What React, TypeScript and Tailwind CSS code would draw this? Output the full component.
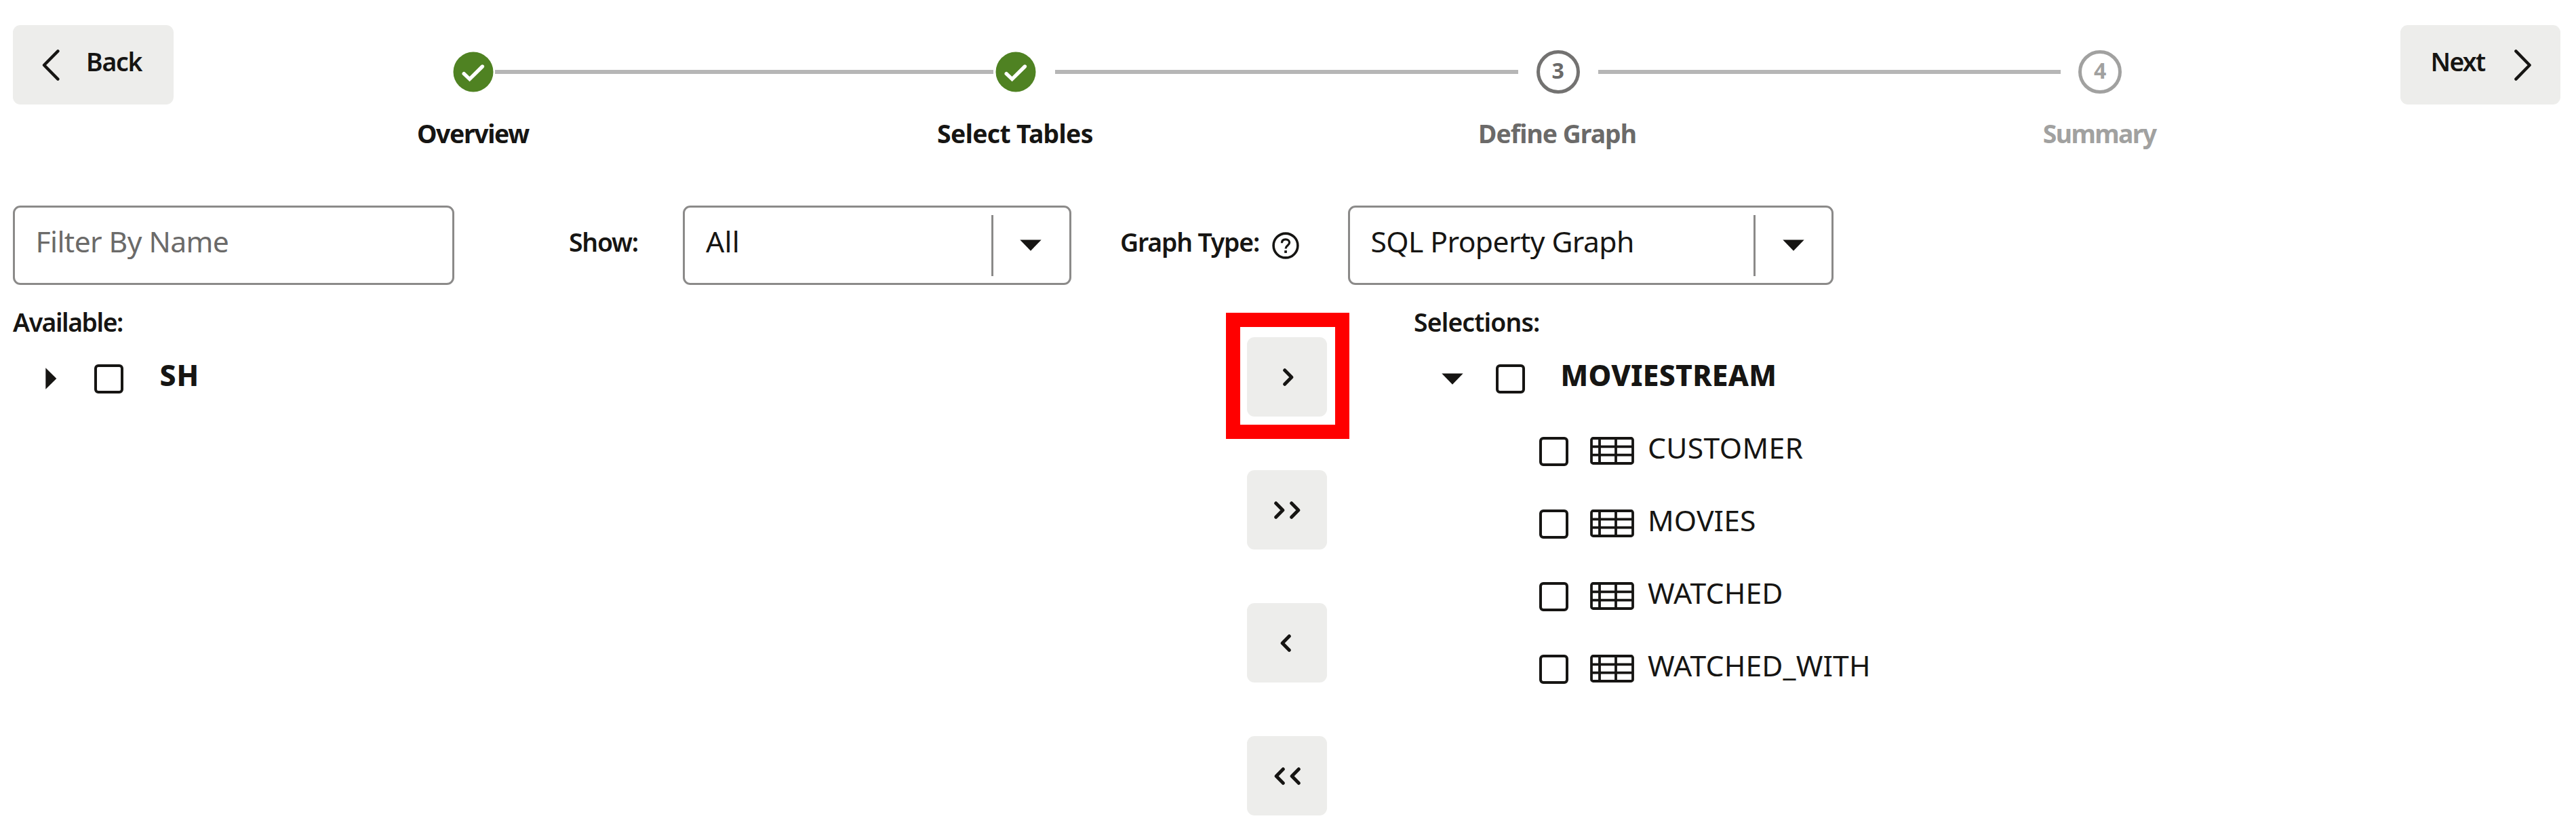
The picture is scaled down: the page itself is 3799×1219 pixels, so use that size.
import React from "react";

const label = "text-[37.33px] leading-[48px] font-semibold whitespace-nowrap";
const body = "text-[42.67px] leading-[56px] whitespace-nowrap";

function LargeChevron({ flip = false }: { flip?: boolean }) {
  return (
    <svg
      width="26"
      height="46"
      viewBox="0 0 26 46"
      fill="none"
      stroke="#161513"
      strokeWidth="4.4"
      strokeLinecap="round"
      strokeLinejoin="round"
      className="shrink-0"
    >
      <path d={flip ? "M2.4 2.4 22.6 23 2.4 43.6" : "M23.4 2.4 3 23l20.4 20.6"} />
    </svg>
  );
}

function SmallChevron({ dir }: { dir: "left" | "right" }) {
  return (
    <svg
      width="16"
      height="26"
      viewBox="0 0 16 26"
      fill="none"
      stroke="#161513"
      strokeWidth="5"
      strokeLinecap="round"
      strokeLinejoin="round"
    >
      <path d={dir === "right" ? "M2.7 2.7 12.8 13 2.7 23.3" : "M13.3 2.7 3.2 13l10.1 10.3"} />
    </svg>
  );
}

function TriangleDown() {
  return (
    <svg width="32" height="17" viewBox="0 0 32 17" fill="#161513" className="shrink-0">
      <path d="M0.3 0.5h31.4L16 16.7z" />
    </svg>
  );
}

function Checkbox() {
  return <span className="box-border h-[43px] w-[43px] shrink-0 rounded-[6px] border-[4px] border-[#161513]" />;
}

function TableIcon() {
  return (
    <svg width="65" height="41" viewBox="0 0 65 41" fill="none" stroke="#161513" strokeWidth="3.8" className="shrink-0">
      <rect x="2" y="2" width="61" height="37" rx="2.5" />
      <path d="M2 14.4h61M2 26.7h61M14 2v37M38 2v37" />
    </svg>
  );
}

function Step({
  title,
  titleClass,
  marker,
  left,
  right,
}: {
  title: string;
  titleClass: string;
  marker: React.ReactNode;
  left: string;
  right: string;
}) {
  return (
    <li className="flex flex-col items-center">
      <div className="grid w-full grid-cols-[1fr_64px_1fr] items-center">
        <span className={left} />
        <span className="flex h-[64px] items-center justify-center">{marker}</span>
        <span className={right} />
      </div>
      <span className={`mt-[35px] mr-[2px] text-[37.33px] leading-[48px] font-bold whitespace-nowrap ${titleClass}`}>
        {title}
      </span>
    </li>
  );
}

function DoneMarker() {
  return (
    <svg width="60" height="60" viewBox="0 0 60 60">
      <circle cx="30" cy="30" r="29.5" fill="#4f8222" />
      <path
        d="M16.2 32.6l8.4 8L43.4 22"
        fill="none"
        stroke="#fff"
        strokeWidth="5.4"
        strokeLinecap="round"
        strokeLinejoin="miter"
      />
    </svg>
  );
}

function Select({ value, width, textClass, arrow }: { value: string; width: string; textClass: string; arrow: string }) {
  return (
    <div className={`flex h-[117px] items-center rounded-[11px] border-[3px] border-[#8b8a89] ${width}`}>
      <span className={`flex-1 pb-[12px] pl-[31px] ${body} ${textClass}`}>{value}</span>
      <span className={`flex h-[90px] items-center border-l-[3px] border-[#8b8a89] ${arrow}`}>
        <TriangleDown />
      </span>
    </div>
  );
}

const moves: { dir: "left" | "right"; count: number; pad: string }[] = [
  { dir: "right", count: 1, pad: "pl-[4px]" },
  { dir: "right", count: 2, pad: "" },
  { dir: "left", count: 1, pad: "pr-[4px]" },
  { dir: "left", count: 2, pad: "" },
];

const tables = [
  { name: "CUSTOMER", spacing: "tracking-[0.35px]" },
  { name: "MOVIES", spacing: "tracking-[0.15px]" },
  { name: "WATCHED", spacing: "tracking-[0.15px]" },
  { name: "WATCHED_WITH", spacing: "tracking-[0.15px]" },
];

const line = "h-[6px] bg-[#b6b6b6]";

export default function App() {
  return (
    <main className="flex h-[1219px] w-[3799px] flex-col overflow-hidden bg-white font-['Noto_Sans',sans-serif] text-[#161513]">
      <header className="flex h-[303px] shrink-0 pr-[23px] pl-[19px]">
        <button className="mt-[37px] flex h-[117px] w-[237px] shrink-0 items-center rounded-[11px] bg-[#ededeb] pl-[43px]">
          <LargeChevron />
          <span className={`ml-[39px] pb-[9px] tracking-[-1.2px] ${label}`}>Back</span>
        </button>
        <ol className="mx-[42.5px] mt-[74px] grid flex-1 grid-cols-4 content-start">
          <Step title="Overview" titleClass="tracking-[-1.37px]" marker={<DoneMarker />} left="" right={line} />
          <Step
            title="Select Tables"
            titleClass="tracking-[-0.65px]"
            marker={<DoneMarker />}
            left={`mr-px ${line}`}
            right={`ml-[26px] ${line}`}
          />
          <Step
            title="Define Graph"
            titleClass="tracking-[-0.98px] text-[#6b6a69]"
            marker={
              <span className="flex h-[64px] w-[64px] items-center justify-center rounded-full border-[5px] border-[#737271] pb-[5px] text-[32px] leading-[40px] font-bold text-[#6b6a69]">
                3
              </span>
            }
            left={`mr-[27px] ${line}`}
            right={`ml-[27px] ${line}`}
          />
          <Step
            title="Summary"
            titleClass="tracking-[-1.6px] text-[#a1a1a0]"
            marker={
              <span className="flex h-[64px] w-[64px] items-center justify-center rounded-full border-[5px] border-[#a1a1a0] pb-[5px] text-[32px] leading-[40px] font-bold text-[#a1a1a0]">
                4
              </span>
            }
            left={`mr-[26px] ${line}`}
            right=""
          />
        </ol>
        <button className="mt-[37px] flex h-[117px] w-[236.5px] shrink-0 items-center rounded-[11px] bg-[#ededeb] pl-[45px] text-left">
          <span className={`w-[123px] shrink-0 pb-[9px] tracking-[-1.7px] ${label}`}>Next</span>
          <LargeChevron flip />
        </button>
      </header>

      <section className="flex h-[117px] shrink-0 items-center pl-[19px]">
        <input
          placeholder="Filter By Name"
          className="h-[117px] w-[651px] rounded-[11px] border-[3px] border-[#8b8a89] pb-[12px] pl-[30.5px] text-[42.67px] tracking-[-0.6px] placeholder:text-[#6b6a69] placeholder:opacity-100"
        />
        <span className={`ml-[169px] w-[168px] pb-[9px] tracking-[-1.2px] ${label}`}>Show:</span>
        <Select value="All" width="w-[573px]" textClass="tracking-[0.3px]" arrow="w-[115px] pl-[39px]" />
        <span className={`ml-[72px] w-[224px] pb-[9px] tracking-[-1.14px] ${label}`}>Graph Type:</span>
        <svg width="40" height="40" viewBox="0 0 40 40" fill="none" stroke="#161513" strokeWidth="3.6">
          <circle cx="20" cy="20" r="17.9" />
          <path d="M14.4 16.2c0-3.6 2.4-5.4 5.6-5.4s5.6 1.9 5.6 4.8c0 4.6-5.5 4.4-5.5 8.8" strokeWidth="3.2" />
          <rect x="18.2" y="27.2" width="3.7" height="3.7" fill="#161513" stroke="none" />
        </svg>
        <Select
          value="SQL Property Graph"
          width="ml-[71.5px] w-[716.5px]"
          textClass="tracking-[-0.6px]"
          arrow="w-[115px] pl-[39.5px]"
        />
      </section>

      <section className="flex flex-1 items-start pl-[19px]">
        <div className="w-[1820px] pt-[30.5px]">
          <h2 className={`tracking-[-1.45px] ${label}`}>Available:</h2>
          <div className="mt-[6px] flex h-[107px] items-center pl-[48px]">
            <svg width="17" height="32" viewBox="0 0 17 32" fill="#161513">
              <path d="M0.3 0.2v31.6L16.3 16z" />
            </svg>
            <span className="ml-[55px] flex">
              <Checkbox />
            </span>
            <span className={`ml-[53.5px] pb-[11px] font-extrabold tracking-[1px] ${body}`}>SH</span>
          </div>
        </div>

        <div className="flex w-[118px] flex-col gap-[79px] pt-[77px]">
          {moves.map((m, i) => (
            <button
              key={i}
              className={`relative flex h-[117px] w-[118px] items-center justify-center gap-[7px] rounded-[11px] bg-[#ededeb] ${m.pad}`}
            >
              {Array.from({ length: m.count }, (_, k) => (
                <SmallChevron key={k} dir={m.dir} />
              ))}
              {i === 0 && (
                <span className="pointer-events-none absolute -top-[36px] -left-[31px] h-[186px] w-[182px] border-[21px] border-[#ff0000]" />
              )}
            </button>
          ))}
        </div>

        <div className="ml-[128px] pt-[30.5px]">
          <h2 className={`tracking-[-0.85px] ${label}`}>Selections:</h2>
          <div className="mt-[6px] flex h-[107px] items-center pl-[41px]">
            <TriangleDown />
            <span className="ml-[48px] flex">
              <Checkbox />
            </span>
            <span className={`ml-[52.5px] pb-[11px] font-extrabold tracking-[0.25px] ${body}`}>MOVIESTREAM</span>
          </div>
          {tables.map((t) => (
            <div key={t.name} className="flex h-[107px] items-center pl-[185px]">
              <Checkbox />
              <span className="ml-[32px] flex pb-[2px]">
                <TableIcon />
              </span>
              <span className={`ml-[20px] pb-[11px] ${body} ${t.spacing}`}>{t.name}</span>
            </div>
          ))}
        </div>
      </section>
    </main>
  );
}
